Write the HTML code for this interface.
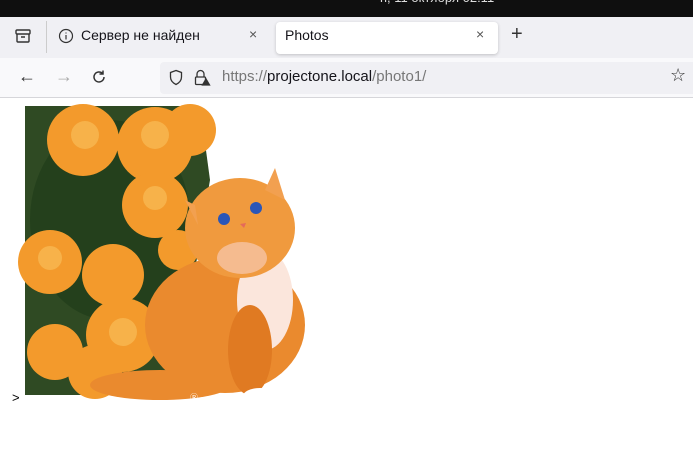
<!DOCTYPE html>
<html><head><meta charset="utf-8"><style>
body{margin:0;width:693px;height:472px;overflow:hidden;background:#fff;font-family:"Liberation Sans","DejaVu Sans",sans-serif;position:relative}
.top{position:absolute;left:0;top:0;width:693px;height:17px;background:#0f0f0f;color:#ddd;font-size:13px;overflow:hidden}
.tabs{position:absolute;left:0;top:17px;width:693px;height:41px;background:#f0f0f4}
.nav{position:absolute;left:0;top:58px;width:693px;height:39px;background:#f9f9fb;border-bottom:1px solid #d6d6da}
.t{position:absolute;font-size:14px;color:#15141a}
</style></head><body>
<div class="top"><span style="position:absolute;left:380px;top:-10px">п, 11 октября 02:11</span></div>
<div style="position:absolute;left:0;top:17px;width:3px;height:80px;background:#333"></div>
<div class="tabs">
 <svg style="position:absolute;left:14px;top:10px" width="18" height="18" viewBox="0 0 18 18" fill="none" stroke="#333" stroke-width="1.4"><rect x="2" y="3" width="14" height="4" rx="1"/><path d="M3 7v7a1 1 0 0 0 1 1h10a1 1 0 0 0 1-1V7M7 10h4"/></svg>
 <div style="position:absolute;left:46px;top:4px;width:1px;height:32px;background:#ccc"></div>
 <svg style="position:absolute;left:58px;top:11px" width="16" height="16" viewBox="0 0 16 16" fill="none" stroke="#333" stroke-width="1.2"><circle cx="8" cy="8" r="6.5"/><path d="M8 7v4.5M8 4.5v1"/></svg>
 <div class="t" style="left:81px;top:10px">Сервер не найден</div>
 <div class="t" style="left:249px;top:9px;color:#555">×</div>
 <div style="position:absolute;left:276px;top:5px;width:222px;height:32px;background:#fff;border-radius:4px;box-shadow:0 1px 3px rgba(0,0,0,.2)"></div>
 <div class="t" style="left:285px;top:10px">Photos</div>
 <div class="t" style="left:476px;top:9px;color:#555">×</div>
 <div class="t" style="left:511px;top:6px;font-size:20px;color:#333">+</div>
</div>
<div class="nav">
 <div class="t" style="left:18px;top:8px;font-size:18px;color:#333">←</div>
 <div class="t" style="left:55px;top:8px;font-size:18px;color:#aaa">→</div>
 <svg style="position:absolute;left:91px;top:11px" width="16" height="16" viewBox="0 0 16 16" fill="none" stroke="#333" stroke-width="1.5"><path d="M13 8a5 5 0 1 1-1.5-3.6M12 1.5v3.5H8.5"/></svg>
 <div style="position:absolute;left:160px;top:4px;width:540px;height:32px;background:#f0f0f4;border-radius:4px"></div>
 <svg style="position:absolute;left:168px;top:11px" width="16" height="17" viewBox="0 0 16 17" fill="none" stroke="#333" stroke-width="1.3"><path d="M8 1.5L2.5 3.5v4.5c0 3.5 2.5 6 5.5 7.5 3-1.5 5.5-4 5.5-7.5V3.5z"/></svg>
 <svg style="position:absolute;left:193px;top:11px" width="18" height="17" viewBox="0 0 18 17" fill="none" stroke="#333" stroke-width="1.3"><path d="M4 8V5a3.5 3.5 0 0 1 7 0v3"/><rect x="2.5" y="8" width="10" height="7.5" rx="1"/><path d="M13 10l3.5 6h-7z" fill="#333"/></svg>
 <div class="t" style="left:222px;top:10px;font-size:15px;color:#777">https://<span style="color:#15141a">projectone.local</span>/photo1/</div>
 <div class="t" style="left:670px;top:7px;font-size:18px;color:#333">☆</div>
</div>
<svg style="position:absolute;left:0;top:98px" width="320" height="320" viewBox="0 98 320 320">
 <path d="M25 106H200L210 180L190 300L170 395H25z" fill="#2f4a23"/>
 <ellipse cx="110" cy="220" rx="80" ry="100" fill="#24401c"/>
 <g fill="#f39a2c">
  <circle cx="83" cy="140" r="36"/><circle cx="155" cy="145" r="38"/><circle cx="190" cy="130" r="26"/>
  <circle cx="155" cy="205" r="33"/><circle cx="50" cy="262" r="32"/><circle cx="113" cy="275" r="31"/>
  <circle cx="123" cy="335" r="37"/><circle cx="55" cy="352" r="28"/><circle cx="178" cy="250" r="20"/><circle cx="95" cy="372" r="27"/>
 </g>
 <g fill="#f7b24a"><circle cx="85" cy="135" r="14"/><circle cx="155" cy="135" r="14"/><circle cx="50" cy="258" r="12"/><circle cx="123" cy="332" r="14"/><circle cx="155" cy="198" r="12"/></g>
 <ellipse cx="225" cy="325" rx="80" ry="68" fill="#ea8a2e"/>
 <ellipse cx="160" cy="385" rx="70" ry="15" fill="#ea8a2e"/>
 <ellipse cx="265" cy="300" rx="28" ry="50" fill="#fbe6dc"/>
 <ellipse cx="250" cy="350" rx="22" ry="45" fill="#e07a22"/>
 <ellipse cx="240" cy="228" rx="55" ry="50" fill="#f09a3e"/>
 <path d="M265 190L275 168L285 200z M195 205L185 200L198 225z" fill="#f2a050"/>
 <ellipse cx="242" cy="258" rx="25" ry="16" fill="#f5bb8f"/>
 <circle cx="224" cy="219" r="6" fill="#2a56b8"/><circle cx="256" cy="208" r="6" fill="#2a56b8"/>
 <path d="M240 224l6-1-2 5z" fill="#e56a5a"/>
 <ellipse cx="260" cy="396" rx="17" ry="8" fill="#fff"/><ellipse cx="290" cy="390" rx="10" ry="6" fill="#fff"/>
 <text x="190" y="400" font-size="8" fill="#fff" font-family="Liberation Sans">Ⓡ</text>
</svg>
<div style="position:absolute;left:12px;top:390px;font-size:13px;color:#000">&gt;</div>
</body></html>
